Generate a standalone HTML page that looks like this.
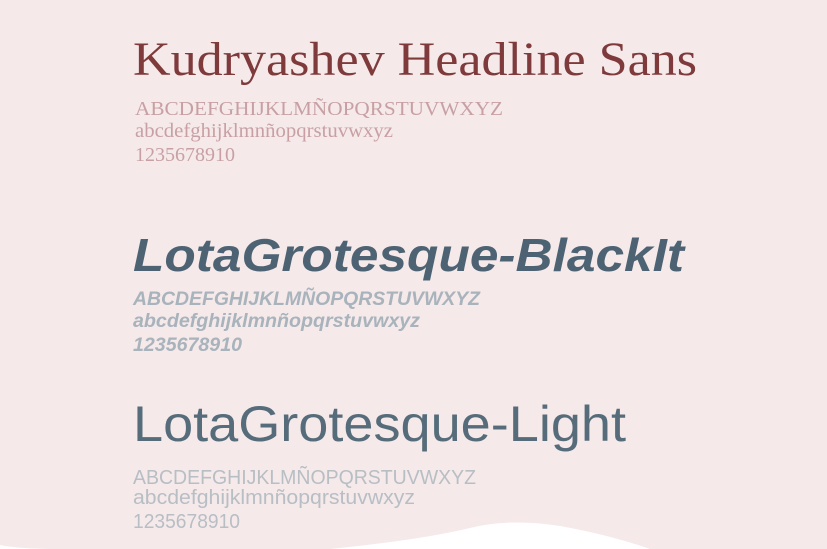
<!DOCTYPE html>
<html><head><style>
html,body{margin:0;padding:0;width:827px;height:549px;overflow:hidden;background:#f5e9ea}
svg{display:block}
</style></head><body>
<svg width="827" height="549" viewBox="0 0 827 549" xmlns="http://www.w3.org/2000/svg">
<rect width="827" height="549" fill="#f5e9ea"/>
<g font-family="Liberation Serif, serif" fill="#7f3a3b">
<text x="133" y="75" font-size="48" textLength="564" lengthAdjust="spacingAndGlyphs">Kudryashev Headline Sans</text>
</g>
<g font-family="Liberation Serif, serif" fill="#c8a0a3">
<text x="135" y="115" font-size="20" textLength="368" lengthAdjust="spacingAndGlyphs">ABCDEFGHIJKLMÑOPQRSTUVWXYZ</text>
<text x="135" y="137" font-size="20" textLength="258" lengthAdjust="spacingAndGlyphs">abcdefghijklmnñopqrstuvwxyz</text>
<text x="135" y="161" font-size="20" textLength="100" lengthAdjust="spacingAndGlyphs">1235678910</text>
</g>
<g font-family="Liberation Sans, sans-serif" font-weight="bold" font-style="italic">
<text x="133" y="271" font-size="46" fill="#4d6373" textLength="551" lengthAdjust="spacingAndGlyphs">LotaGrotesque-BlackIt</text>
<text x="133" y="305" font-size="19" fill="#a8b3bc" textLength="347" lengthAdjust="spacingAndGlyphs">ABCDEFGHIJKLMÑOPQRSTUVWXYZ</text>
<text x="133" y="327" font-size="19" fill="#a8b3bc" textLength="287" lengthAdjust="spacingAndGlyphs">abcdefghijklmnñopqrstuvwxyz</text>
<text x="133" y="351" font-size="19" fill="#a8b3bc" textLength="109" lengthAdjust="spacingAndGlyphs">1235678910</text>
</g>
<g font-family="Liberation Sans, sans-serif">
<text x="133" y="441" font-size="50" fill="#566c7a" textLength="493" lengthAdjust="spacingAndGlyphs">LotaGrotesque-Light</text>
<text x="133" y="484" font-size="20" fill="#b7bec4" textLength="343" lengthAdjust="spacingAndGlyphs">ABCDEFGHIJKLMÑOPQRSTUVWXYZ</text>
<text x="133" y="504" font-size="20" fill="#b7bec4" textLength="282" lengthAdjust="spacingAndGlyphs">abcdefghijklmnñopqrstuvwxyz</text>
<text x="133" y="528" font-size="20" fill="#b7bec4" textLength="107" lengthAdjust="spacingAndGlyphs">1235678910</text>
</g>
<path d="M0 545 Q20 549 60 549 L330 549 Q420 540 470 528 Q510 518 560 526 Q610 535 650 549 L0 549 Z" fill="#ffffff"/>
</svg>
</body></html>
